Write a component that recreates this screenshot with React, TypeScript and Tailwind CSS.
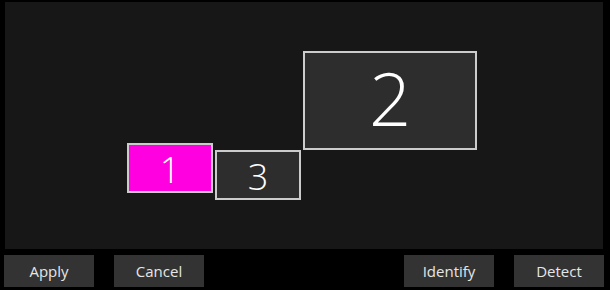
const monitors = [
  { id: '1', left: 122, top: 141, w: 86, h: 50, size: 'text-[36px] pt-[4px]', active: true },
  { id: '3', left: 210, top: 148, w: 86, h: 50, size: 'text-[36px] pt-[4px]', active: false },
  { id: '2', left: 298, top: 49, w: 174, h: 99, size: 'text-[74px] pb-[6px]', active: false },
];

function Monitor({ m }: { m: (typeof monitors)[number] }) {
  return (
    <div
      className={`absolute flex items-center justify-center border-2 border-[#cccccc] ${
        m.active ? 'bg-[#ff00e0]' : 'bg-[#2d2d2d]'
      }`}
      style={{ left: m.left, top: m.top, width: m.w, height: m.h }}
    >
      <span className={`${m.size} font-light leading-none text-white`}>{m.id}</span>
    </div>
  );
}

function Button({ label }: { label: string }) {
  return (
    <button
      type="button"
      className="h-[32px] w-[90px] bg-[#333333] text-[15px] text-[#e6e6e6] leading-none"
    >
      {label}
    </button>
  );
}

export default function App() {
  return (
    <div
      className="h-[290px] w-[610px] overflow-hidden bg-black pt-[2px]"
      style={{ fontFamily: '"Open Sans", "Noto Sans", sans-serif' }}
    >
      <div className="relative ml-[5px] h-[247px] w-[598px] bg-[#171717]">
        {monitors.map((m) => (
          <Monitor key={m.id} m={m} />
        ))}
      </div>
      <div className="ml-[4px] mt-[6px] flex w-[600px] justify-between">
        <div className="flex gap-[20px]">
          <Button label="Apply" />
          <Button label="Cancel" />
        </div>
        <div className="flex gap-[20px]">
          <Button label="Identify" />
          <Button label="Detect" />
        </div>
      </div>
    </div>
  );
}
